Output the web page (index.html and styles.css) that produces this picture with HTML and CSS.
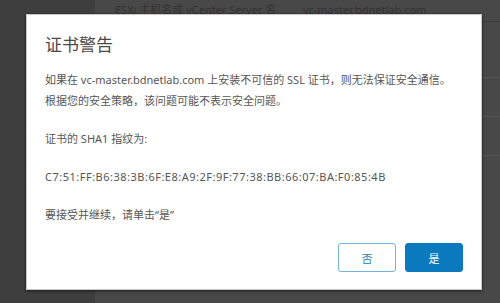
FILE: index.html
```html
<!DOCTYPE html>
<html lang="zh-CN">
<head>
    <meta charset="UTF-8">
    <title>证书警告</title>
    <link rel="stylesheet" href="styles.css">
</head>
<body>
    <div class="backdrop">
        <div class="sidebar"></div>
        <div class="main">
            <div class="row head">
                <span class="col-a">ESXi 主机名或 vCenter Server 名</span>
                <span class="col-b">vc-master.bdnetlab.com</span>
            </div>
            <div class="row tall"></div>
            <div class="row"></div>
            <div class="row"></div>
        </div>
    </div>

    <div class="modal">
        <h3 class="modal-title">证书警告</h3>
        <div class="modal-body">
            <p>如果在 vc-master.bdnetlab.com 上安装不可信的 SSL 证书，则无法保证安全通信。<br>根据您的安全策略，该问题可能不表示安全问题。</p>
            <p>证书的 SHA1 指纹为:</p>
            <p class="thumbprint">C7:51:FF:B6:38:3B:6F:E8:A9:2F:9F:77:38:BB:66:07:BA:F0:85:4B</p>
            <p>要接受并继续，请单击“是”</p>
        </div>
        <div class="modal-footer">
            <button class="btn btn-outline">否</button>
            <button class="btn btn-primary">是</button>
        </div>
    </div>
</body>
</html>
```

FILE: styles.css
```css
html, body {
    margin: 0;
    padding: 0;
    width: 500px;
    height: 303px;
    overflow: hidden;
    font-family: "Noto Sans", "Noto Sans CJK SC", sans-serif;
    background: #474747;
}
.backdrop {
    display: flex;
    height: 303px;
}
.sidebar {
    width: 95px;
    background: #3e3e3e;
}
.main {
    flex: 1;
    background: #484848;
}
.row {
    height: 38px;
    border-bottom: 1px solid #555;
}
.row.head {
    height: 21px;
    font-size: 11px;
    line-height: 20px;
    color: #333;
    border-bottom-color: #3d3d3d;
    white-space: nowrap;
}
.row.tall {
    height: 55px;
}
.col-a {
    display: inline-block;
    width: 185px;
    padding-left: 20px;
}
.modal {
    position: absolute;
    left: 26px;
    top: 14px;
    width: 456px;
    height: 276px;
    box-sizing: border-box;
    background: #fff;
    border: 1px solid #c8c8c8;
    box-shadow: 0 1px 3px rgba(0, 0, 0, 0.6);
    padding: 18px 18px 17px 18px;
    display: flex;
    flex-direction: column;
}
.modal-title {
    margin: 0;
    font-size: 17px;
    line-height: 24px;
    font-weight: normal;
    color: #4a4a4a;
}
.modal-body {
    margin-top: 12px;
    flex: 1;
    font-size: 11px;
    line-height: 21px;
    color: #565656;
    white-space: nowrap;
}
.modal-body p {
    margin: 0 0 17px 0;
}
.modal-body .thumbprint {
    letter-spacing: 0.5px;
}
.modal-footer {
    display: flex;
    justify-content: flex-end;
    gap: 9px;
}
.btn {
    width: 58px;
    height: 29px;
    border-radius: 3px;
    font-family: "Noto Sans CJK SC", sans-serif;
    font-size: 11px;
    padding: 0;
}
.btn-outline {
    background: #fff;
    border: 1px solid #74b3dc;
    color: #2a7fbc;
}
.btn-primary {
    background: #0a79be;
    border: 1px solid #0a79be;
    color: #fff;
}
```
